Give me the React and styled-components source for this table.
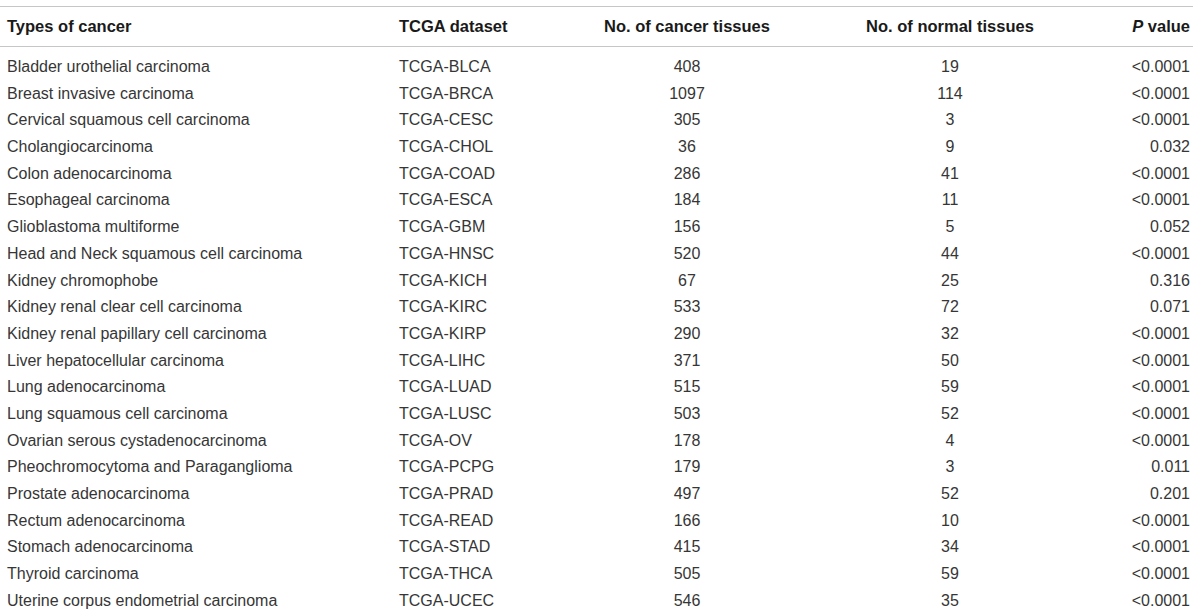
import React from "react";
import styled, { createGlobalStyle } from "styled-components";

const Global = createGlobalStyle`
  html, body { margin: 0; padding: 0; background: #ffffff; }
  body { font-family: "Liberation Sans", Arial, Helvetica, sans-serif; }
`;

const rows = [
  ["Bladder urothelial carcinoma", "TCGA-BLCA", "408", "19", "<0.0001"],
  ["Breast invasive carcinoma", "TCGA-BRCA", "1097", "114", "<0.0001"],
  ["Cervical squamous cell carcinoma", "TCGA-CESC", "305", "3", "<0.0001"],
  ["Cholangiocarcinoma", "TCGA-CHOL", "36", "9", "0.032"],
  ["Colon adenocarcinoma", "TCGA-COAD", "286", "41", "<0.0001"],
  ["Esophageal carcinoma", "TCGA-ESCA", "184", "11", "<0.0001"],
  ["Glioblastoma multiforme", "TCGA-GBM", "156", "5", "0.052"],
  ["Head and Neck squamous cell carcinoma", "TCGA-HNSC", "520", "44", "<0.0001"],
  ["Kidney chromophobe", "TCGA-KICH", "67", "25", "0.316"],
  ["Kidney renal clear cell carcinoma", "TCGA-KIRC", "533", "72", "0.071"],
  ["Kidney renal papillary cell carcinoma", "TCGA-KIRP", "290", "32", "<0.0001"],
  ["Liver hepatocellular carcinoma", "TCGA-LIHC", "371", "50", "<0.0001"],
  ["Lung adenocarcinoma", "TCGA-LUAD", "515", "59", "<0.0001"],
  ["Lung squamous cell carcinoma", "TCGA-LUSC", "503", "52", "<0.0001"],
  ["Ovarian serous cystadenocarcinoma", "TCGA-OV", "178", "4", "<0.0001"],
  ["Pheochromocytoma and Paraganglioma", "TCGA-PCPG", "179", "3", "0.011"],
  ["Prostate adenocarcinoma", "TCGA-PRAD", "497", "52", "0.201"],
  ["Rectum adenocarcinoma", "TCGA-READ", "166", "10", "<0.0001"],
  ["Stomach adenocarcinoma", "TCGA-STAD", "415", "34", "<0.0001"],
  ["Thyroid carcinoma", "TCGA-THCA", "505", "59", "<0.0001"],
  ["Uterine corpus endometrial carcinoma", "TCGA-UCEC", "546", "35", "<0.0001"],
];

const columns = "392px 181px 214px 312px 1fr";

const Table = styled.div`
  width: 1193px;
  margin-top: 6px;
  border-top: 1px solid #c6c6c6;
`;

const HeaderRow = styled.div`
  display: grid;
  grid-template-columns: ${columns};
  height: 39px;
  line-height: 39px;
  padding: 0 3px 0 7px;
  border-bottom: 1px solid #c6c6c6;
  font-size: 16.5px;
  font-weight: 700;
  color: #1a1a1a;
`;

const Body = styled.div`
  padding: 7px 3px 0 7px;
`;

const Row = styled.div`
  display: grid;
  grid-template-columns: ${columns};
  height: 26.7px;
  line-height: 26.7px;
  font-size: 16px;
  color: #363636;
`;

const Cell = styled.div`
  text-align: ${(p) => p.$align || "left"};
  white-space: nowrap;
`;

const Italic = styled.i`
  font-style: italic;
`;

export default function App() {
  return (
    <>
      <Global />
      <Table>
        <HeaderRow>
          <Cell>Types of cancer</Cell>
          <Cell>TCGA dataset</Cell>
          <Cell $align="center">No. of cancer tissues</Cell>
          <Cell $align="center">No. of normal tissues</Cell>
          <Cell $align="right">
            <Italic>P</Italic> value
          </Cell>
        </HeaderRow>
        <Body>
          {rows.map((r) => (
            <Row key={r[1]}>
              <Cell>{r[0]}</Cell>
              <Cell>{r[1]}</Cell>
              <Cell $align="center">{r[2]}</Cell>
              <Cell $align="center">{r[3]}</Cell>
              <Cell $align="right">{r[4]}</Cell>
            </Row>
          ))}
        </Body>
      </Table>
    </>
  );
}
